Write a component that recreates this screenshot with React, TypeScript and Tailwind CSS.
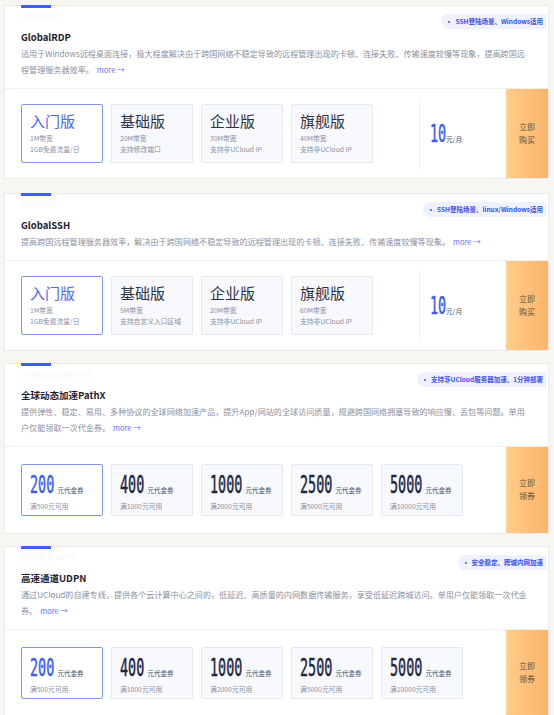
import clsx from "clsx";

type Plan = { name: string; l1: string; l2: string };
type Coupon = { v: string; cond: string };

type Product = {
  title: string;
  badge: string;
  lines: string[];
  plans?: Plan[];
  coupons?: Coupon[];
  action: string[];
};

const products: Product[] = [
  {
    title: "GlobalRDP",
    badge: "SSH登陆场景、Windows适用",
    lines: [
      "适用于Windows远程桌面连接，极大程度解决由于跨国网络不稳定导致的远程管理出现的卡顿、连接失败、传输速度较慢等现象，提高跨国远",
      "程管理服务器效率。",
    ],
    plans: [
      { name: "入门版", l1: "1M带宽", l2: "1GB免费流量/日" },
      { name: "基础版", l1: "20M带宽", l2: "支持修改端口" },
      { name: "企业版", l1: "30M带宽", l2: "支持非UCloud IP" },
      { name: "旗舰版", l1: "40M带宽", l2: "支持非UCloud IP" },
    ],
    action: ["立即", "购买"],
  },
  {
    title: "GlobalSSH",
    badge: "SSH登陆场景、linux/Windows适用",
    lines: ["提高跨国远程管理服务器效率，解决由于跨国网络不稳定导致的远程管理出现的卡顿、连接失败、传输速度较慢等现象。"],
    plans: [
      { name: "入门版", l1: "1M带宽", l2: "1GB免费流量/日" },
      { name: "基础版", l1: "5M带宽", l2: "支持自定义入口区域" },
      { name: "企业版", l1: "20M带宽", l2: "支持非UCloud IP" },
      { name: "旗舰版", l1: "60M带宽", l2: "支持非UCloud IP" },
    ],
    action: ["立即", "购买"],
  },
  {
    title: "全球动态加速PathX",
    badge: "支持非UCloud服务器加速、1分钟部署",
    lines: [
      "提供弹性、稳定、易用、多种协议的全球网络加速产品，提升App/网站的全球访问质量，规避跨国网络拥塞导致的响应慢、丢包等问题。单用",
      "户仅能领取一次代金券。",
    ],
    coupons: [
      { v: "200", cond: "满500元可用" },
      { v: "400", cond: "满1000元可用" },
      { v: "1000", cond: "满2000元可用" },
      { v: "2500", cond: "满5000元可用" },
      { v: "5000", cond: "满10000元可用" },
    ],
    action: ["立即", "领券"],
  },
  {
    title: "高速通道UDPN",
    badge: "安全稳定、跨城内网加速",
    lines: [
      "通过UCloud的自建专线，提供各个云计算中心之间的，低延迟、高质量的内网数据传输服务，享受低延迟跨城访问。单用户仅能领取一次代金",
      "券。",
    ],
    coupons: [
      { v: "200", cond: "满500元可用" },
      { v: "400", cond: "满1000元可用" },
      { v: "1000", cond: "满2000元可用" },
      { v: "2500", cond: "满5000元可用" },
      { v: "5000", cond: "满10000元可用" },
    ],
    action: ["立即", "领券"],
  },
];

// digit advance ~8px after squeezing
const numWidth: Record<number, string> = {
  2: "w-[16px]",
  3: "w-[24.5px]",
  4: "w-[32.5px]",
};

function Num({ v, blue }: { v: string; blue?: boolean }) {
  return (
    <span className={clsx("inline-block h-[20px]", numWidth[v.length])}>
      <span
        className={clsx(
          "inline-block origin-left scale-x-[0.56] whitespace-nowrap font-['DejaVu_Sans_Mono',monospace] text-[24px] leading-[20px] [-webkit-text-stroke:0.5px_currentColor]",
          blue ? "text-[#3c5cf6]" : "text-[#1f2540]"
        )}
      >
        {v}
      </span>
    </span>
  );
}

function PlanBox({ plan, active }: { plan: Plan; active: boolean }) {
  return (
    <div
      className={clsx(
        "h-[59px] w-[82px] rounded-[2px] border pl-[8px] pt-[7px]",
        active ? "border-[#7e94f6] bg-white" : "border-[#e4e8f1] bg-[#f8f9fd]"
      )}
    >
      <div className={clsx("text-[15px] leading-[18px]", active ? "text-[#5068f2]" : "text-[#2d3346]")}>
        {plan.name}
      </div>
      <div className="mt-[3px] whitespace-nowrap text-[6.8px] leading-[10.5px] text-[#8a8f9e]">{plan.l1}</div>
      <div className="whitespace-nowrap text-[6.8px] leading-[10.5px] text-[#8a8f9e]">{plan.l2}</div>
    </div>
  );
}

function CouponBox({ c, active }: { c: Coupon; active: boolean }) {
  return (
    <div
      className={clsx(
        "h-[52px] w-[82px] rounded-[2px] border pl-[8px] pt-[9px]",
        active ? "border-[#7e94f6] bg-white" : "border-[#e4e8f1] bg-[#f8f9fd]"
      )}
    >
      <div className="flex items-baseline gap-[3px]">
        <Num v={c.v} blue={active} />
        <span className="whitespace-nowrap text-[6.5px] text-[#4a5068]">元代金券</span>
      </div>
      <div className="mt-[5px] whitespace-nowrap text-[6.8px] leading-[10px] text-[#8a8f9e]">{c.cond}</div>
    </div>
  );
}

function ProductCard({ p, first }: { p: Product; first: boolean }) {
  return (
    <div className={clsx("relative ml-[4px] w-[545px] border border-[#ebebee] bg-white", first && "mb-[2px]")}>
      <div className="border-b border-[#eef0f6] px-[16px] pb-[10px]">
        <div className="-mt-px h-[3px] w-[30px] bg-[#3f5ef5]" />
        <div className="mt-[2px] h-[12px] text-[8px] leading-[12px] text-[#f6f7fa]">{p.title}</div>
        <div className="mt-[8px] text-[9.5px] font-bold leading-[14px] text-[#1f2330]">{p.title}</div>
        <div className="mt-[2px] text-[8.1px] leading-[16px] text-[#8b8fa0]">
          {p.lines.map((line, i) => (
            <div key={i} className="whitespace-nowrap">
              {line}
              {i === p.lines.length - 1 && <span className="ml-[3px] text-[7.5px] text-[#6d70f2]">more →</span>}
            </div>
          ))}
        </div>
      </div>

      <div className="absolute right-[2px] top-[8px] flex h-[15px] items-center gap-[5px] rounded-l-full bg-[#eff2fd] pl-[7px] pr-[3px]">
        <span className="h-[2px] w-[2px] rounded-full bg-[#3d4ff0]" />
        <span className="whitespace-nowrap text-[6.5px] font-bold text-[#3d4ff0]">{p.badge}</span>
      </div>

      <div className="flex">
        {p.plans ? (
          <>
            <div className="flex flex-1 gap-[8px] py-[15px] pl-[16px]">
              {p.plans.map((plan, i) => (
                <PlanBox key={plan.name} plan={plan} active={i === 0} />
              ))}
            </div>
            <div className="my-[9px] w-px bg-[#eef0f6]" />
            <div className="flex w-[86px] items-center pl-[10px]">
              <div className="flex items-baseline">
                <Num v="10" blue />
                <span className="text-[6.8px] text-[#4a5068]">元/月</span>
              </div>
            </div>
          </>
        ) : (
          <div className="flex flex-1 gap-[8px] py-[17px] pl-[16px]">
            {p.coupons!.map((c, i) => (
              <CouponBox key={c.v} c={c} active={i === 0} />
            ))}
          </div>
        )}
        <div className="flex w-[42px] flex-col items-center justify-center bg-gradient-to-r from-[#ffcd8c] to-[#fbb468] text-[8px] leading-[12.6px] text-[#6b4b2c]">
          <span>{p.action[0]}</span>
          <span>{p.action[1]}</span>
        </div>
      </div>
    </div>
  );
}

export default function App() {
  return (
    <div className="min-h-[715px] w-[554px] bg-[#f8f6f1] pt-[5px] font-['Noto_Sans_CJK_SC',sans-serif]">
      <div className="flex flex-col gap-[12px]">
        {products.map((p, i) => (
          <ProductCard key={p.title} p={p} first={i === 0} />
        ))}
      </div>
    </div>
  );
}
